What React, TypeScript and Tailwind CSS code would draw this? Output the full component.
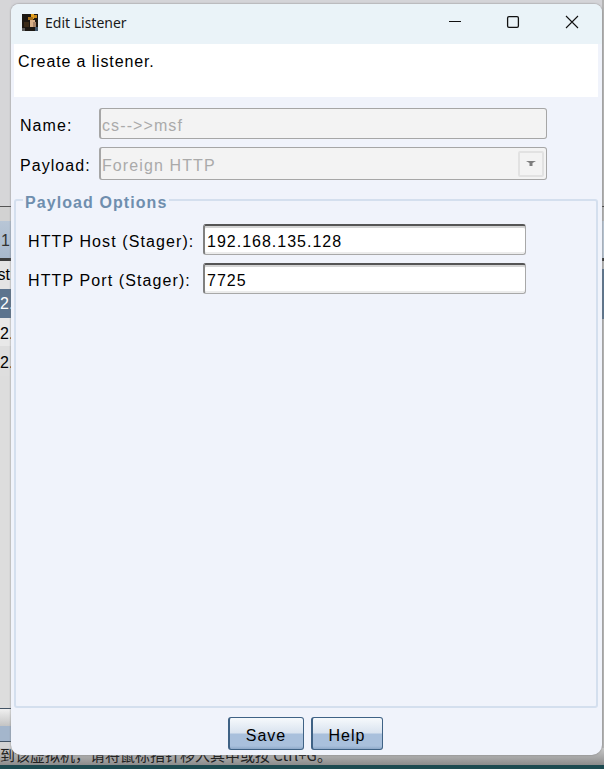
const uiFont = "font-['Liberation_Sans',Arial,sans-serif]";

function AppIcon() {
  return (
    <svg width="16" height="17" viewBox="0 0 16 17" className="shrink-0">
      <rect width="16" height="17" fill="#1c1712" />
      <rect x="9" y="0" width="3" height="5" fill="#e0a020" />
      <rect x="12" y="1" width="3" height="3" fill="#c98a1c" />
      <rect x="6" y="3" width="5" height="3" fill="#a8701c" />
      <rect x="8" y="6" width="5" height="7" fill="#d8b088" />
      <rect x="11" y="8" width="3" height="5" fill="#a88468" />
      <rect x="2" y="8" width="5" height="5" fill="#3a2a18" />
      <rect x="13" y="13" width="3" height="4" fill="#44586c" />
      <rect x="0" y="14" width="3" height="3" fill="#5c5c5c" />
    </svg>
  );
}

function WindowControls() {
  return (
    <div className="flex items-center text-[#111]">
      <svg width="14" height="14" viewBox="0 0 14 14" className="mr-[44px]" fill="none" stroke="currentColor" strokeWidth="1.1">
        <path d="M1 6.5h12" />
      </svg>
      <svg width="14" height="14" viewBox="0 0 14 14" className="mr-[45px]" fill="none" stroke="currentColor" strokeWidth="1.3">
        <rect x="1.6" y="1.6" width="10.8" height="10.8" rx="1.4" />
      </svg>
      <svg width="14" height="14" viewBox="0 0 14 14" className="mr-[23px]" fill="none" stroke="currentColor" strokeWidth="1.1">
        <path d="M1 1l12 12M13 1L1 13" />
      </svg>
    </div>
  );
}

function TextField({ value }: { value: string }) {
  return (
    <div className="flex h-[31px] w-[323px] items-center rounded-[3px] border border-[#a8a8a8] border-t-2 border-t-[#555] border-l-2 border-l-[#808080] bg-white pl-[2px] pt-[4px] text-[16px] tracking-[1px] text-black shadow-[inset_0_2px_0_#d4d4d4,inset_0_-2px_0_#ececec]">
      {value}
    </div>
  );
}

function DisabledField({ value, height, children }: { value: string; height: string; children?: React.ReactNode }) {
  return (
    <div className={`flex w-[448px] items-center justify-between rounded-[3px] border border-[#a6a6a6] border-l-2 bg-[#f3f3f3] pl-[1px] pr-[2px] text-[16px] tracking-[1.1px] text-[#aaaaaa] ${height}`}>
      <span className="pt-[4px]">{value}</span>
      {children}
    </div>
  );
}

function DialogButton({ label, width }: { label: string; width: string }) {
  return (
    <div className={`flex h-[33px] items-center justify-center rounded-[3px] border border-[#3f6285] border-l-2 bg-[linear-gradient(#f6f9fc_0%,#d9e3ef_48%,#a9c0dc_52%,#a9c0dc_90%,#8ea9c8_100%)] pt-[5px] text-[16px] tracking-[1px] text-black ${width}`}>
      {label}
    </div>
  );
}

function LeftStrip() {
  return (
    <div className="flex w-[11px] shrink-0 flex-col overflow-hidden bg-[#d6d6d8] text-[16px] leading-none text-black">
      <div className="h-[207px] border-b border-[#555]" />
      <div className="h-[14px] bg-[#d2d2d2]" />
      <div className="flex h-[37px] items-center justify-end bg-[linear-gradient(#b8c6d6,#a8b8cc)] pr-[1px] pt-[2px] text-[#333]">1</div>
      <div className="h-[3px] bg-[#3c3c3c]" />
      <div className="flex h-[28px] items-center justify-end bg-[#e4e4e4] pr-[1px]">st</div>
      <div className="flex h-[29px] items-center bg-[#5c748e] pl-0 text-white">2.</div>
      <div className="flex h-[28px] items-center bg-[#e8e8e8] pt-[3px]">2.</div>
      <div className="flex h-[30px] items-center bg-[#dedede] pt-[3px]">2.</div>
      <div className="h-[332px] bg-[#dddddd]" />
      <div className="h-[1px] bg-[#445566]" />
      <div className="h-[17px] bg-[linear-gradient(#f0f0f0,#c4c4c4)]" />
      <div className="h-[15px] bg-[#a4b6cc]" />
      <div className="h-[1px] bg-[#445566]" />
      <div className="flex-1 bg-[#d4d4d4]" />
    </div>
  );
}

function RightStrip() {
  return (
    <div className="flex w-[2px] shrink-0 flex-col bg-[#b4b4b4]">
      <div className="h-[207px] border-b border-[#444]" />
      <div className="h-[14px]" />
      <div className="h-[37px] bg-[#b8c4d2]" />
      <div className="h-[3px] bg-[#3c3c3c]" />
      <div className="h-[8px]" />
      <div className="h-[50px] bg-[#5c748e]" />
      <div className="flex-1" />
    </div>
  );
}

export default function App() {
  return (
    <div className={`relative flex h-[769px] w-[604px] flex-col overflow-hidden bg-[#d4d4d8] ${uiFont}`}>
      <div className="flex min-h-0 flex-1 justify-between">
        <LeftStrip />
        <RightStrip />
      </div>
      <div className="flex h-[17px] items-start overflow-hidden whitespace-nowrap bg-[linear-gradient(#c8c8c8,#8c8c8c)] font-['Noto_Sans_CJK_SC',sans-serif] text-[15px] leading-[13px] text-[#222]">
        到该虚拟机，请将鼠标指针移入其中或按 Ctrl+G。
      </div>
      <div className="h-[4px] bg-[#1c4a50]" />

      <div className="absolute left-[11px] top-[4px] flex h-[751px] w-[591px] flex-col overflow-hidden rounded-t-[8px] rounded-b-[10px] bg-[#f0f3fb] shadow-[0_0_2px_#777]">
        <div className="flex h-[40px] items-center justify-between bg-[#eaf3f8] pb-[4px] pl-[11px]">
          <div className="flex items-center gap-[7px] font-['Noto_Sans',sans-serif] text-[14px] text-[#1a1a1a]">
            <AppIcon />
            Edit Listener
          </div>
          <WindowControls />
        </div>

        <div className="flex flex-1 flex-col pl-[3px] pr-[4px]">
          <div className="h-[53px] bg-white pl-[4px] pt-[9px] text-[16px] leading-[18px] tracking-[0.87px] text-black">
            Create a listener.
          </div>

          <div className="flex flex-col gap-[8px] pl-[6px] pt-[11px] text-[16px] tracking-[1.05px] text-black">
            <div className="flex items-center">
              <span className="w-[79px] pt-[5px]">Name:</span>
              <DisabledField value="cs-->>msf" height="h-[31px]" />
            </div>
            <div className="flex items-center">
              <span className="w-[79px] pt-[5px]">Payload:</span>
              <DisabledField value="Foreign HTTP" height="h-[33px]">
                <div className="flex h-[26px] w-[26px] items-center justify-center rounded-[2px] border-2 border-[#e2e2e2] bg-[#f3f3f3]">
                  <svg width="10" height="5" viewBox="0 0 10 5">
                    <path d="M0 0h10L6.5 2v3h-3V2z" fill="#7d7d7d" />
                  </svg>
                </div>
              </DisabledField>
            </div>
          </div>

          <div className="relative mt-[19px] flex h-[509px] w-[584px] flex-col gap-[8px] rounded-t-[3px] rounded-b-[3px] border-2 border-[#d4dfee] pl-[12px] pt-[23px] text-[16px] tracking-[1.1px] text-black">
            <span className="absolute -top-[7px] left-[7px] bg-[#f0f3fb] px-[2px] text-[16px] font-bold leading-[18px] tracking-[1.08px] text-[#6f8eae]">
              Payload Options
            </span>
            <div className="flex items-center">
              <span className="w-[175px] pt-[5px]">HTTP Host (Stager):</span>
              <TextField value="192.168.135.128" />
            </div>
            <div className="flex items-center">
              <span className="w-[175px] pt-[5px]">HTTP Port (Stager):</span>
              <TextField value="7725" />
            </div>
          </div>

          <div className="flex justify-center gap-[7px] pr-[2px] pt-[9px]">
            <DialogButton label="Save" width="w-[76px]" />
            <DialogButton label="Help" width="w-[72px]" />
          </div>
        </div>
      </div>
    </div>
  );
}
